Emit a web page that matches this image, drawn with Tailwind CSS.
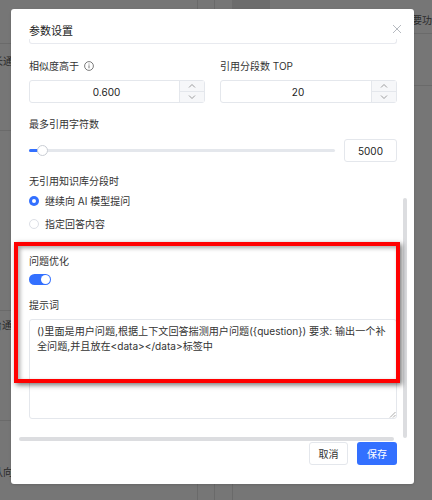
<!DOCTYPE html>
<html lang="zh">
  <head>
    <meta charset="UTF-8" />
    <meta name="viewport" content="width=device-width, initial-scale=1.0" />
    <title>参数设置</title>
    <script src="https://cdn.jsdelivr.net/npm/@tailwindcss/browser@4"></script>
  </head>
  <body class="bg-[#767676]">
    <div class="relative h-[500px] w-[432px] overflow-hidden bg-[#767676] font-['Inter','Noto_Sans_CJK_SC',sans-serif] text-[10px] leading-[14px] text-[#333]">
      <!-- 背景页面 -->
      <div class="absolute left-[232px] top-0 h-[9px] w-[38px] bg-[#6c6c6c]"></div>
      <div class="absolute left-[197px] top-0 h-[9px] w-px bg-[#6a6a6a]"></div>
      <div class="absolute left-[214px] top-0 h-[9px] w-px bg-[#6a6a6a]"></div>
      <div class="absolute left-[197px] top-[484px] h-4 w-px bg-[#6a6a6a]"></div>
      <div class="absolute left-[214px] top-[484px] h-4 w-px bg-[#6a6a6a]"></div>
      <div class="absolute left-[232px] top-[484px] h-4 w-px bg-[#6a6a6a]"></div>
      <div class="absolute left-0 top-[43px] h-px w-[11px] bg-[#6a6a6a]"></div>
      <div class="absolute left-0 top-[130px] h-px w-[11px] bg-[#6a6a6a]"></div>
      <div class="absolute left-0 top-[310px] h-px w-[11px] bg-[#6a6a6a]"></div>
      <div class="absolute left-0 top-[420px] h-px w-[11px] bg-[#6a6a6a]"></div>
      <div class="absolute left-[414px] top-[33px] h-px w-[18px] bg-[#6a6a6a]"></div>
      <div class="absolute left-[414px] top-[85px] h-px w-[18px] bg-[#6a6a6a]"></div>
      <span class="absolute left-[-7px] top-[54px] whitespace-nowrap text-[#2a2a2a]">长通</span>
      <span class="absolute left-[-8px] top-[318px] whitespace-nowrap text-[#2a2a2a]">台通</span>
      <span class="absolute left-[-7px] top-[465px] whitespace-nowrap text-[#2a2a2a]">认向</span>
      <span class="absolute left-[412px] top-[13px] whitespace-nowrap text-[#2a2a2a]">要功</span>

      <!-- 弹窗 -->
      <div class="absolute left-[11px] top-[9px] flex h-[475px] w-[403px] flex-col rounded-[3px] bg-white shadow-sm">
        <div class="flex h-[30px] shrink-0 items-start justify-between pl-[18px] pr-[9px] pt-[14px]">
          <h2 class="text-[11px] font-normal leading-[16px] text-[#222]">参数设置</h2>
          <svg class="mt-[-2px] h-[16px] w-[16px]" viewBox="0 0 16 16" fill="none" stroke="#a3a8b0" stroke-width="0.8">
            <path d="M4 4l8 8M12 4l-8 8" />
          </svg>
        </div>

        <div class="relative min-h-0 flex-1">
          <div class="pl-[18px] pr-[17px]">
            <!-- 被裁切的上一个输入框 -->
            <div class="h-[5px] rounded-b-[3px] border border-t-0 border-[#e8eaef]"></div>

            <div class="mt-[15px] grid grid-cols-[176px_177px] gap-x-[15px]">
              <div>
                <label class="flex h-[14px] items-center gap-[5px]">
                  相似度高于
                  <svg class="h-[10px] w-[10px]" viewBox="0 0 10 10" fill="none" stroke="#444" stroke-width="0.7">
                    <circle cx="5" cy="5" r="4.4" />
                    <path d="M5 4.3v3M5 2.6v.9" />
                  </svg>
                </label>
                <div class="mt-[7px] flex h-[23px] rounded-[3px] border border-[#e4e7ec]">
                  <div class="flex flex-1 items-center justify-center pl-[4px] text-[10px] text-[#222]">0.600</div>
                  <div class="flex w-[25px] flex-col border-l border-[#e4e7ec] bg-[#f6f7f9]">
                    <div class="flex flex-1 items-center justify-center border-b border-[#e4e7ec]">
                      <svg class="h-[6px] w-[8px]" viewBox="0 0 8 6" fill="none" stroke="#777" stroke-width="0.7"><path d="M1 4.5l3-3 3 3" /></svg>
                    </div>
                    <div class="flex flex-1 items-center justify-center">
                      <svg class="h-[6px] w-[8px]" viewBox="0 0 8 6" fill="none" stroke="#777" stroke-width="0.7"><path d="M1 1.5l3 3 3-3" /></svg>
                    </div>
                  </div>
                </div>
              </div>
              <div>
                <label class="flex h-[14px] items-center">引用分段数 TOP</label>
                <div class="mt-[7px] flex h-[23px] rounded-[3px] border border-[#e4e7ec]">
                  <div class="flex flex-1 items-center justify-center pl-[4px] text-[10px] text-[#222]">20</div>
                  <div class="flex w-[25px] flex-col border-l border-[#e4e7ec] bg-[#f6f7f9]">
                    <div class="flex flex-1 items-center justify-center border-b border-[#e4e7ec]">
                      <svg class="h-[6px] w-[8px]" viewBox="0 0 8 6" fill="none" stroke="#777" stroke-width="0.7"><path d="M1 4.5l3-3 3 3" /></svg>
                    </div>
                    <div class="flex flex-1 items-center justify-center">
                      <svg class="h-[6px] w-[8px]" viewBox="0 0 8 6" fill="none" stroke="#777" stroke-width="0.7"><path d="M1 1.5l3 3 3-3" /></svg>
                    </div>
                  </div>
                </div>
              </div>
            </div>

            <label class="mt-[14px] block">最多引用字符数</label>
            <div class="mt-[8px] flex h-[23px] items-center justify-between">
              <div class="relative h-[3px] w-[306px] rounded-full bg-[#e4e7ec]">
                <div class="h-full w-[10px] rounded-l-full bg-[#3370ff]"></div>
                <div class="absolute left-[8px] top-[-4px] h-[11px] w-[11px] rounded-full border border-[#c9cdd4] bg-white"></div>
              </div>
              <div class="flex h-[23px] w-[53px] items-center justify-center rounded-[3px] border border-[#e4e7ec] text-[#222]">5000</div>
            </div>

            <label class="mt-[12px] block">无引用知识库分段时</label>
            <div class="mt-[6px] flex h-[14px] items-center gap-[6px]">
              <span class="flex h-[10px] w-[10px] items-center justify-center rounded-full bg-[#3370ff]">
                <span class="h-[4px] w-[4px] rounded-full bg-white"></span>
              </span>
              继续向 AI 模型提问
            </div>
            <div class="mt-[9px] flex h-[14px] items-center gap-[6px]">
              <span class="h-[10px] w-[10px] rounded-full border border-[#dcdfe6]"></span>
              指定回答内容
            </div>

            <label class="mt-[23px] block">问题优化</label>
            <div class="mt-[6px] flex h-[11px] w-[22px] items-center justify-end rounded-full bg-[#3370ff] pr-[1px]">
              <span class="h-[9px] w-[9px] rounded-full bg-white"></span>
            </div>
            <label class="mt-[13px] block">提示词</label>
            <div class="relative mt-[7px] h-[100px] rounded-[3px] border border-[#e4e7ec] px-[7px] py-[4px] text-[10.1px] leading-[15px] text-[#333]">
              ()里面是用户问题,根据上下文回答揣测用户问题({question}) 要求: 输出一个补全问题,并且放在&lt;data&gt;&lt;/data&gt;标签中
              <svg class="absolute bottom-0 right-0 h-[7px] w-[7px]" viewBox="0 0 7 7" fill="none" stroke="#888" stroke-width="0.7">
                <path d="M1 6.5L6.5 1M4 6.5L6.5 4" />
              </svg>
            </div>
          </div>

          <!-- 滚动条 -->
          <div class="absolute left-[8px] top-[398px] h-[4px] w-[375px] rounded-full bg-[#dcdde0]"></div>
          <div class="absolute left-[392px] top-[159px] h-[240px] w-[4px] rounded-full bg-[#dcdde0]"></div>
        </div>

        <div class="flex h-[46px] shrink-0 justify-end gap-[9px] pr-[17px] pt-[4px]">
          <button class="h-[23px] w-[39px] rounded-[3px] border border-[#e4e7ec] bg-white text-[10px] text-[#333]">取消</button>
          <button class="h-[23px] w-[40px] rounded-[3px] bg-[#3370ff] text-[10px] text-white">保存</button>
        </div>
      </div>

      <!-- 红色标注框 -->
      <div class="absolute left-[14px] top-[242px] h-[141px] w-[386px] border-[4px] border-[#f00] shadow-[2px_2px_5px_rgba(0,0,0,0.55),inset_2px_2px_4px_rgba(0,0,0,0.35)]"></div>
    </div>
  </body>
</html>
